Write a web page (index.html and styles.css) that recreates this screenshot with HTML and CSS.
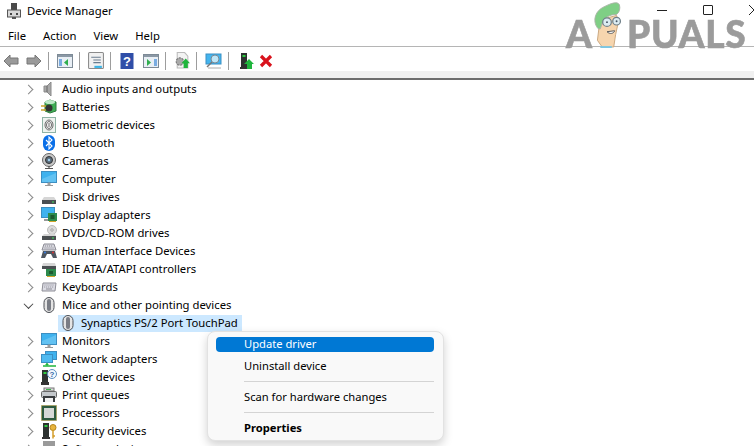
FILE: index.html
```html
<!DOCTYPE html>
<html lang="en">
<head>
<meta charset="utf-8">
<title>Device Manager</title>
<link rel="stylesheet" href="styles.css">
</head>
<body>
<div class="window">
  <header class="titlebar">
    <svg class="app-icon" viewBox="0 0 14 16"><rect x="4" y="0" width="6" height="8" fill="#4a4a4a"/><rect x="0.5" y="7" width="13" height="7" fill="#d8d8d8" stroke="#555"/><rect x="3" y="10" width="2" height="2" fill="#444"/><rect x="9" y="10" width="2" height="2" fill="#444"/><rect x="5" y="14" width="4" height="2" fill="#555"/></svg>
    <span class="title">Device Manager</span>
    <div class="controls">
      <span class="ctl-min"></span>
      <span class="ctl-max"></span>
      <svg class="ctl-close" viewBox="0 0 5 10"><path d="M0 0L5 5L0 10" fill="none" stroke="#222" stroke-width="1"/></svg>
    </div>
  </header>
  <nav class="menubar"><span>File</span><span>Action</span><span>View</span><span>Help</span></nav>
  <div class="toolbar">
    <svg class="tb w16" viewBox="0 0 16 14"><path d="M1 7L7 1V4H15V10H7V13Z" fill="#9a9a9a" stroke="#777"/></svg>
    <svg class="tb w16 gap-s" viewBox="0 0 16 14"><path d="M15 7L9 1V4H1V10H9V13Z" fill="#9a9a9a" stroke="#777"/></svg>
    <i class="sep"></i>
    <svg class="tb w16" viewBox="0 0 16 14"><rect x=".5" y=".5" width="15" height="13" fill="#e9eff5" stroke="#7d8a96"/><rect x="1" y="1" width="14" height="2" fill="#8b98a5"/><rect x="2" y="5" width="3" height="7" fill="#4a90d9" opacity=".7"/><path d="M11 5V12L7 8.500Z" fill="#2fae4e"/></svg>
    <i class="sep"></i>
    <svg class="tb w15" viewBox="0 0 15 16"><rect x=".5" y=".5" width="14" height="15" rx="1" fill="#f1f1f1" stroke="#8b8b8b"/><path d="M3 5h9M5 7.500h7M5 10h7" stroke="#6a7c8e"/><rect x="6" y="13" width="7" height="2" fill="#38b3e6"/></svg>
    <i class="sep"></i>
    <svg class="tb w13" viewBox="0 0 13 16"><rect width="13" height="16" fill="#2f4ea8"/><text x="6.500" y="13" class="q">?</text></svg>
    <svg class="tb w16 gap-m" viewBox="0 0 16 14"><rect x=".5" y=".5" width="15" height="13" fill="#e9eff5" stroke="#7d8a96"/><rect x="1" y="1" width="14" height="2" fill="#8b98a5"/><path d="M4 5V12L8 8.500Z" fill="#2fae4e"/><rect x="11" y="5" width="3" height="7" fill="#4a90d9" opacity=".7"/></svg>
    <i class="sep"></i>
    <svg class="tb w15" viewBox="0 0 15 16"><path d="M3 .5H10L13 4V15H3Z" fill="#f3f3f3" stroke="#bbb"/><circle cx="5.500" cy="9" r="3.500" fill="#a9a9a9" stroke="#777" stroke-dasharray="2 1"/><path d="M11 6L15 10.500H13V15H9V10.500H7Z" fill="#1fb53c"/></svg>
    <i class="sep"></i>
    <svg class="tb w17" viewBox="0 0 17 16"><rect x="1" y="1" width="15" height="10" fill="#43b4ee" stroke="#3a90c4"/><circle cx="10" cy="6" r="4" fill="#bfe6f7" stroke="#7a8a96"/><path d="M7 9L2 14" stroke="#777" stroke-width="1.500"/><path d="M3 15H16" stroke="#aaa"/></svg>
    <i class="sep"></i>
    <svg class="tb w14 gap-k" viewBox="0 0 14 16"><rect x="1" y="0" width="6" height="14" fill="#2d3230"/><rect x="2.500" y="2" width="3" height="2" fill="#2ecc40"/><rect x="0" y="14" width="8" height="2" fill="#333"/><path d="M9 6L14 11H12V16H7V11H4Z" fill="#1fb53c"/></svg>
    <svg class="tb w14 gap-l" viewBox="0 0 14 14"><path d="M2 2L12 12M12 2L2 12" stroke="#d8121c" stroke-width="3.200"/></svg>
  </div>
  <div class="band"></div>
  <ul class="tree">
    <li class="row"><i class="chev"></i><svg class="ic" viewBox="0 0 16 16"><path d="M3 5H6L10 1V15L6 11H3Z" fill="#a8a8a8" stroke="#8a8a8a"/><path d="M6 5V11" stroke="#666"/></svg><span>Audio inputs and outputs</span></li>
    <li class="row"><i class="chev"></i><svg class="ic" viewBox="0 0 16 16"><path d="M4 3L9 1L15 3V12L9 14L4 12Z" fill="#3fae55" stroke="#2f7d3e"/><ellipse cx="9" cy="3" rx="5" ry="2" fill="#bfe8c8"/><circle cx="8" cy="9" r="3.500" fill="#333"/><path d="M0 7H5M0 11H5" stroke="#c9a12a" stroke-width="1.500"/></svg><span>Batteries</span></li>
    <li class="row"><i class="chev"></i><svg class="ic" viewBox="0 0 14 16"><rect x=".5" y=".5" width="13" height="15" fill="#eef3ef" stroke="#8fb3a5"/><ellipse cx="7" cy="8" rx="4" ry="5" fill="#fff" stroke="#666"/><ellipse cx="7" cy="8" rx="2.500" ry="3.500" fill="none" stroke="#666"/><path d="M7 6V10" stroke="#666"/></svg><span>Biometric devices</span></li>
    <li class="row"><i class="chev"></i><svg class="ic" viewBox="0 0 14 16"><rect x="1" y="0" width="12" height="16" rx="6" fill="#0a6fe8"/><path d="M4 5L10 11L7 14V2L10 5L4 11" fill="none" stroke="#fff" stroke-width="1.100"/></svg><span>Bluetooth</span></li>
    <li class="row"><i class="chev"></i><svg class="ic" viewBox="0 0 16 16"><circle cx="8" cy="7" r="6.500" fill="#c9c9c9" stroke="#666"/><circle cx="8" cy="7" r="3.500" fill="#5a6c7c" stroke="#333"/><circle cx="8" cy="7" r="1.200" fill="#9fd0ee"/><path d="M8 13V15M4 15.500H12" stroke="#555" stroke-width="1.200"/></svg><span>Cameras</span></li>
    <li class="row"><i class="chev"></i><svg class="ic wide" viewBox="0 0 16 16"><rect x=".5" y=".5" width="15" height="11" fill="#3fb2ee" stroke="#3d8fc2"/><path d="M1 8L15 2V11H1Z" fill="#7bcdf5" opacity=".6"/><path d="M7 12H9V14H7ZM4 14.500H12" stroke="#999" fill="#aaa"/></svg><span>Computer</span></li>
    <li class="row"><i class="chev"></i><svg class="ic wide" viewBox="0 0 16 16"><path d="M3 8H13L15 11H1Z" fill="#d6d6d6"/><rect x="1" y="11" width="14" height="4" fill="#4a4f52"/><rect x="11" y="12.500" width="2" height="1" fill="#3ee05a"/></svg><span>Disk drives</span></li>
    <li class="row"><i class="chev"></i><svg class="ic wide" viewBox="0 0 16 16"><rect x=".5" y=".5" width="13" height="10" fill="#3fb2ee" stroke="#3d8fc2"/><path d="M3 13H7" stroke="#999" stroke-width="2"/><rect x="7" y="6" width="9" height="8" fill="#2d8a4d"/><rect x="9.500" y="8" width="4" height="4" fill="#1d5a30"/><path d="M8 14.500H15" stroke="#d1a52c"/></svg><span>Display adapters</span></li>
    <li class="row"><i class="chev"></i><svg class="ic wide" viewBox="0 0 16 16"><circle cx="11" cy="5" r="4.500" fill="#dcdcdc" stroke="#bbb"/><circle cx="11" cy="5" r="1.200" fill="#fff" stroke="#999"/><path d="M3 9H14L15 11H1Z" fill="#d6d6d6"/><rect x="1" y="11" width="14" height="4" fill="#4a4f52"/><rect x="11" y="12.500" width="2" height="1" fill="#3ee05a"/></svg><span>DVD/CD-ROM drives</span></li>
    <li class="row"><i class="chev"></i><svg class="ic wide" viewBox="0 0 16 16"><path d="M3 1H13L15 7H1Z" fill="#d5d5dc" stroke="#8d8d96"/><path d="M4 3H12M3.500 5H12.500" stroke="#8d8d96" stroke-dasharray="1 1"/><path d="M2 8H14L16 15H12L10 11H6L4 15H0Z" fill="#4e5660"/><circle cx="12" cy="9.500" r="1" fill="#d33"/><circle cx="4" cy="9.500" r="1" fill="#3a7ee0"/></svg><span>Human Interface Devices</span></li>
    <li class="row"><i class="chev"></i><svg class="ic wide" viewBox="0 0 16 16"><path d="M2 2H14L15 5H1Z" fill="#d6d6d6"/><rect x="1" y="5" width="14" height="3" fill="#4a4f52"/><rect x="5" y="8" width="10" height="7" fill="#2d8a4d"/><rect x="8" y="10" width="4" height="3" fill="#1d5a30"/><path d="M6 15.500H14" stroke="#d1a52c"/></svg><span>IDE ATA/ATAPI controllers</span></li>
    <li class="row"><i class="chev"></i><svg class="ic wide" viewBox="0 0 16 16"><path d="M2 4H15L14 12H1Z" fill="#dcdce4" stroke="#8d8d96"/><path d="M3.500 6H13.500M3.200 8H13.200" stroke="#8d8d96" stroke-dasharray="1 1"/><path d="M5 10H11" stroke="#8d8d96"/></svg><span>Keyboards</span></li>
    <li class="row"><i class="chev open"></i><svg class="ic" viewBox="0 0 16 16"><rect x="3" y="0.500" width="10" height="15" rx="5" fill="#e4e4e4" stroke="#4c4f55"/><rect x="6" y="2" width="4" height="12" rx="2" fill="#7a7d85"/></svg><span>Mice and other pointing devices</span></li>
    <li class="row child"><div class="picked"><svg class="ic" viewBox="0 0 16 16"><rect x="3" y="0.500" width="10" height="15" rx="5" fill="#e4e4e4" stroke="#4c4f55"/><rect x="6" y="2" width="4" height="12" rx="2" fill="#7a7d85"/></svg><span>Synaptics PS/2 Port TouchPad</span></div></li>
    <li class="row"><i class="chev"></i><svg class="ic wide" viewBox="0 0 16 16"><rect x=".5" y=".5" width="15" height="11" fill="#3fb2ee" stroke="#3d8fc2"/><path d="M1 8L15 2V11H1Z" fill="#7bcdf5" opacity=".6"/><path d="M7 12H9V14H7ZM4 14.500H12" stroke="#999" fill="#aaa"/></svg><span>Monitors</span></li>
    <li class="row"><i class="chev"></i><svg class="ic wide" viewBox="0 0 16 16"><rect x="4.500" y=".5" width="11" height="8" fill="#3fb2ee" stroke="#3d8fc2"/><rect x=".5" y="3.500" width="11" height="8" fill="#4fbaf0" stroke="#3d8fc2"/><path d="M6 12V14M2 15H15" stroke="#1fb53c" stroke-width="1.500"/><path d="M4 13H8L6 15Z" fill="#1fb53c"/></svg><span>Network adapters</span></li>
    <li class="row"><i class="chev"></i><svg class="ic wide" viewBox="0 0 16 16"><rect x="1" y="1" width="6" height="12" fill="#2d3230"/><rect x="2.500" y="3" width="3" height="2" fill="#2ecc40"/><rect x="0" y="13" width="8" height="3" fill="#333"/><circle cx="11" cy="5" r="4.500" fill="#f5f9fd" stroke="#5c8fc2"/><text x="11" y="8" class="qm">?</text></svg><span>Other devices</span></li>
    <li class="row"><i class="chev"></i><svg class="ic wide" viewBox="0 0 16 16"><rect x="3" y="1" width="10" height="3" fill="#dcdcdc" stroke="#777"/><rect x="5" y="2" width="5" height="1" fill="#39b54a"/><rect x="0.500" y="4.500" width="15" height="6" rx="1" fill="#c4c8cc" stroke="#666"/><rect x="2" y="9" width="12" height="6" fill="#3a3d40"/><rect x="4" y="11" width="8" height="4" fill="#f2f2f2"/></svg><span>Print queues</span></li>
    <li class="row"><i class="chev"></i><svg class="ic wide" viewBox="0 0 16 16"><rect x=".5" y=".5" width="15" height="15" fill="#2d5a3f" stroke="#b59a3c" stroke-dasharray="1 1"/><rect x="3" y="3" width="10" height="10" fill="#d6d8d6"/></svg><span>Processors</span></li>
    <li class="row"><i class="chev"></i><svg class="ic wide" viewBox="0 0 16 16"><rect x="2" y="0" width="6" height="14" fill="#2d3230"/><rect x="3.500" y="2" width="3" height="2" fill="#2ecc40"/><rect x="1" y="14" width="8" height="2" fill="#333"/><circle cx="12" cy="4.500" r="3" fill="#e8b43c" stroke="#b5851c"/><path d="M12 7V15.500M12 13H14" stroke="#d49d2a" stroke-width="1.500"/></svg><span>Security devices</span></li>
    <li class="row"><i class="chev"></i><svg class="ic" viewBox="0 0 16 16"><rect x="2" y="0" width="12" height="16" fill="#9a9a9a"/></svg><span>Software devices</span></li>
  </ul>
</div>
<div class="logo">
  <span class="logo-a">A</span>
  <span class="logo-rest">PUALS</span>
  <svg class="mascot" viewBox="0 0 34 48"><path d="M9 24L7 40L12 47H24L26 34L29 20L27 14L12 18Z" fill="#f6d5ae" stroke="#c9a67e"/><path d="M8 28C2 22 3 10 14 5C22 1 28 -1 30 3C31 7 30 11 27 13C20 13 14 16 12 22L10 28Z" fill="#7fcf85" stroke="#a9b3a6"/><circle cx="17" cy="21" r="4.500" fill="#dcecf2" stroke="#6f7f88" stroke-width="1.300"/><circle cx="27" cy="20" r="4" fill="#dcecf2" stroke="#6f7f88" stroke-width="1.300"/><path d="M17 31C20 34 24 33 25 30Z" fill="#fff" stroke="#555"/><circle cx="17" cy="21" r="1" fill="#456"/><circle cx="27" cy="20" r="1" fill="#456"/><path d="M10 47H22" stroke="#7cc6e2" stroke-width="2"/></svg>
</div>
<div class="menu">
  <div class="item active">Update driver</div>
  <div class="item">Uninstall device</div>
  <hr class="rule">
  <div class="item">Scan for hardware changes</div>
  <hr class="rule">
  <div class="item bold">Properties</div>
</div>
</body>
</html>
```

FILE: styles.css
```css
* { box-sizing: border-box; }
html, body { margin: 0; height: 446px; overflow: hidden; background: #fff; }
body { font-family: "Noto Sans", "Open Sans", sans-serif; font-size: 11.3px; color: #000; position: relative; }
.window { height: 446px; overflow: hidden; display: flex; flex-direction: column; }

.titlebar { height: 22px; flex: none; display: flex; align-items: center; padding-left: 7px; }
.title { padding-bottom: 2px; }
.app-icon { width: 14px; height: 16px; margin-right: 6px; }
.controls { margin-left: auto; display: flex; align-items: center; }
.ctl-min { width: 10px; height: 1px; background: #222; margin-right: 36px; position: relative; top: -1px; }
.ctl-max { width: 10px; height: 10px; border: 1px solid #222; border-radius: 1px; margin-right: 36px; position: relative; top: -1px; }
.ctl-close { width: 5px; height: 10px; position: relative; top: -1px; }

.menubar { height: 25px; flex: none; display: flex; align-items: center; border-bottom: 1px solid #b5b5b5; padding: 2px 0 0 8px; gap: 17px; }

.toolbar { height: 24px; flex: none; display: flex; align-items: center; padding: 3px 0 0 3px; }
.tb { flex: none; }
.w16 { width: 16px; height: 14px; }
.w15 { width: 16px; height: 17px; }
.w13 { width: 14px; height: 16px; margin-left: 1px; }
.w17 { width: 17px; height: 16px; }
.w14 { width: 14px; height: 16px; }
.gap-s { margin-left: 7px; }
.gap-m { margin-left: 9px; }
.gap-k { margin-left: 3px; }
.gap-l { margin-left: 5px; }
.sep { width: 1px; height: 18px; background: #9d9d9d; margin: 0 8px 0 6px; flex: none; }
.q { fill: #fff; font: bold 13px "Liberation Sans", sans-serif; text-anchor: middle; }
.qm { fill: #3566a8; font: bold 8px "Liberation Sans", sans-serif; text-anchor: middle; }

.band { height: 9px; flex: none; background: #f0f0f0; border-bottom: 2px solid #6d6d6d; }

.tree { list-style: none; margin: 0; padding: 0; }
.row { height: 18px; display: flex; align-items: center; padding-left: 25px; white-space: nowrap; }
.row span { padding-bottom: 2px; }
.chev { width: 7px; height: 7px; border-top: 1.500px solid #8a8a8a; border-right: 1.500px solid #8a8a8a; transform: rotate(45deg); margin-right: 8px; flex: none; }
.chev.open { border-color: #444; transform: rotate(135deg) translate(-1px, 1px); }
.ic { width: 16px; height: 16px; flex: none; margin-right: 5px; margin-left: 1px; }
.ic.wide { width: 18px; margin-left: 0; margin-right: 4px; }
.child { padding-left: 58px; }
.picked { display: flex; align-items: center; width: 184px; height: 17px; background: #cce8ff; padding-left: 2px; }
.picked .ic { margin-right: 5px; margin-left: 0; }

.logo { position: absolute; left: 566px; top: 0; width: 186px; height: 54px; color: #9b9b9b; font: 900 37px/1 "Lato", "Open Sans", sans-serif; filter: blur(.4px); }
.logo-a { position: absolute; left: 0; top: 15px; -webkit-text-stroke: .6px #9b9b9b; }
.logo-rest { position: absolute; left: 61px; top: 15px; letter-spacing: 0.700px; -webkit-text-stroke: .6px #9b9b9b; }
.mascot { position: absolute; left: 24px; top: 2px; width: 34px; height: 46px; }

.menu { position: absolute; left: 207px; top: 331px; width: 237px; height: 110px; background: #f9f9f9; border: 1px solid #e2e2e2; border-radius: 8px; box-shadow: 0 4px 10px rgba(0,0,0,.18); padding: 5px 9px 0 8px; }
.item { height: 15px; line-height: 14px; padding-left: 28px; font-size: 11.2px; margin-bottom: 7px; }
.item.active { background: #0078d4; color: #fff; border-radius: 4px; width: 218px; }
.item.bold { font-weight: 700; }
.rule { height: 1px; border: 0; background: #d4d4d4; margin: 0 0 8px 28px; width: 190px; }
```
